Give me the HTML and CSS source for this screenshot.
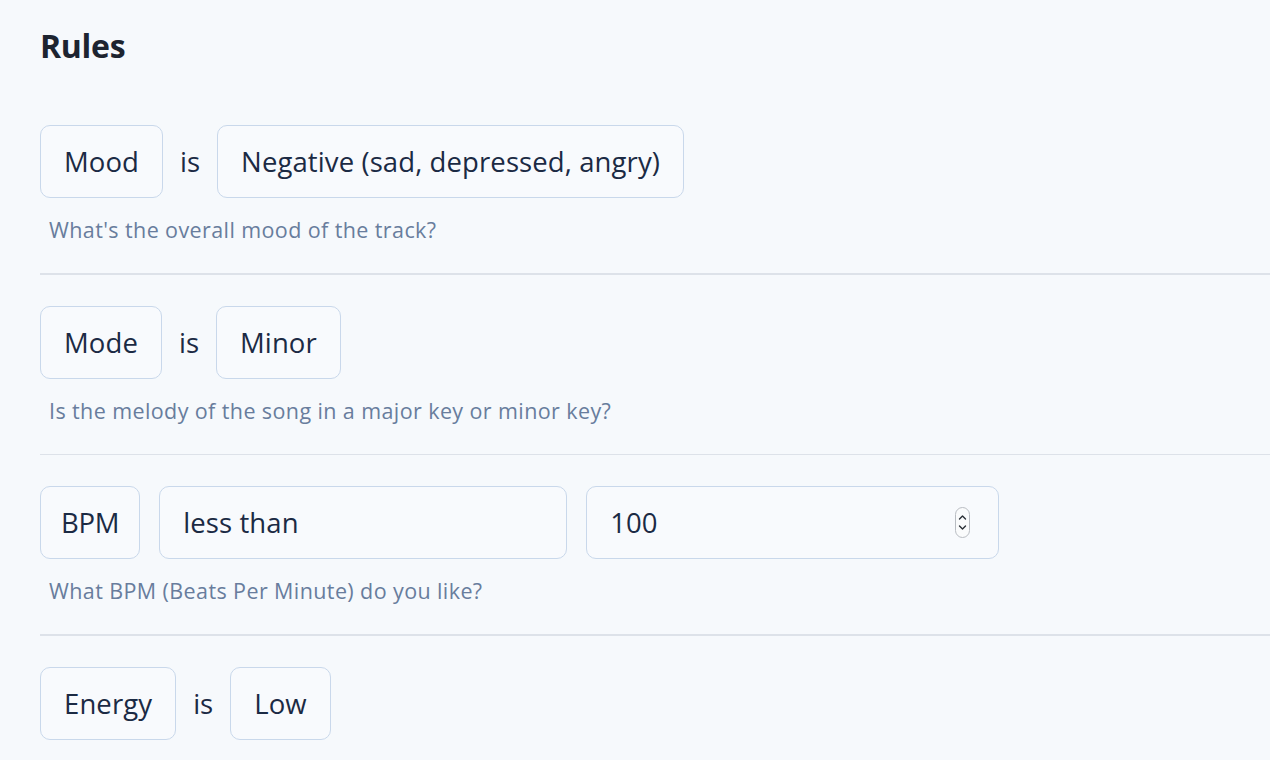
FILE: index.html
```html
<!DOCTYPE html>
<html>
<head>
<meta charset="utf-8">
<link rel="stylesheet" href="styles.css">
</head>
<body>
<div class="page">
  <h1 class="title">Rules</h1>

  <div class="rule">
    <div class="row">
      <div class="chip">Mood</div>
      <span class="op">is</span>
      <div class="chip">Negative (sad, depressed, angry)</div>
    </div>
    <p class="help">What's the overall mood of the track?</p>
  </div>
  <hr class="sep">

  <div class="rule">
    <div class="row">
      <div class="chip">Mode</div>
      <span class="op">is</span>
      <div class="chip">Minor</div>
    </div>
    <p class="help">Is the melody of the song in a major key or minor key?</p>
  </div>
  <hr class="sep">

  <div class="rule">
    <div class="row gap">
      <div class="chip tight">BPM</div>
      <div class="chip select">less than</div>
      <div class="chip number">
        <span>100</span>
        <span class="spin">
          <svg width="15" height="31" viewBox="0 0 15 31">
            <rect x="0.5" y="0.5" width="14" height="30" rx="7" fill="#fafbfc" stroke="#b8bcc2"/>
            <path d="M4.5 12 L7.5 9 L10.5 12" fill="none" stroke="#2a2f36" stroke-width="1.4" stroke-linecap="round" stroke-linejoin="round"/>
            <path d="M4.5 19 L7.5 22 L10.5 19" fill="none" stroke="#2a2f36" stroke-width="1.4" stroke-linecap="round" stroke-linejoin="round"/>
          </svg>
        </span>
      </div>
    </div>
    <p class="help">What BPM (Beats Per Minute) do you like?</p>
  </div>
  <hr class="sep">

  <div class="rule">
    <div class="row">
      <div class="chip">Energy</div>
      <span class="op">is</span>
      <div class="chip">Low</div>
    </div>
  </div>
</div>
</body>
</html>
```

FILE: styles.css
```css
html, body {
  margin: 0;
  padding: 0;
  background: #f6f9fc;
  overflow: hidden;
}
.page {
  padding: 26px 0 0 40px;
  font-family: "Open Sans", "Noto Sans", sans-serif;
}
.title {
  margin: 0 0 59px 0;
  font-size: 32px;
  line-height: 40px;
  font-weight: 700;
  color: #1d2430;
  letter-spacing: -0.3px;
}
.row {
  display: flex;
  align-items: center;
  gap: 17px;
}
.row.gap {
  gap: 19px;
}
.chip {
  box-sizing: border-box;
  height: 73px;
  padding: 0 23px;
  display: flex;
  align-items: center;
  border: 1.5px solid #c9d8eb;
  border-radius: 10px;
  background: #f8fafd;
  font-size: 27.5px;
  letter-spacing: 0.1px;
  color: #1b2a44;
}
.chip.tight {
  padding: 0 20px;
  letter-spacing: -0.3px;
}
.chip.select {
  width: 408px;
}
.chip.number {
  width: 413px;
  justify-content: space-between;
  padding-right: 28px;
}
.spin {
  display: flex;
}
.op {
  font-size: 27.5px;
  color: #1b2a44;
}
.help {
  margin: 20px 0 0 9px;
  font-size: 21.5px;
  line-height: 24px;
  letter-spacing: 0.4px;
  color: #687d9d;
}
.sep {
  margin: 31px 0 31px 0;
  border: 0;
  height: 1.5px;
  background: #dde2e9;
}
```
